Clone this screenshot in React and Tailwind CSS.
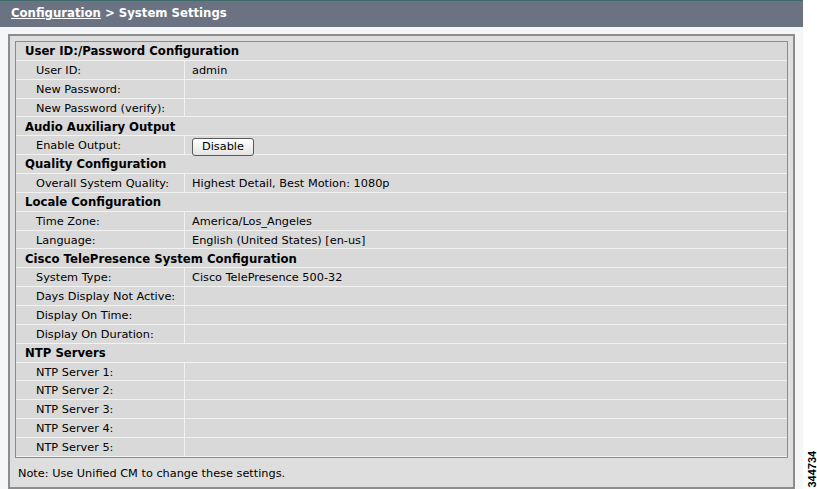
import React from 'react';

const sections = [
  {
    title: 'User ID:/Password Configuration',
    rows: [
      ['User ID:', 'admin'],
      ['New Password:', ''],
      ['New Password (verify):', ''],
    ],
  },
  {
    title: 'Audio Auxiliary Output',
    rows: [['Enable Output:', 'button']],
  },
  {
    title: 'Quality Configuration',
    rows: [['Overall System Quality:', 'Highest Detail, Best Motion: 1080p']],
  },
  {
    title: 'Locale Configuration',
    rows: [
      ['Time Zone:', 'America/Los_Angeles'],
      ['Language:', 'English (United States) [en-us]'],
    ],
  },
  {
    title: 'Cisco TelePresence System Configuration',
    rows: [
      ['System Type:', 'Cisco TelePresence 500-32'],
      ['Days Display Not Active:', ''],
      ['Display On Time:', ''],
      ['Display On Duration:', ''],
    ],
  },
  {
    title: 'NTP Servers',
    rows: [
      ['NTP Server 1:', ''],
      ['NTP Server 2:', ''],
      ['NTP Server 3:', ''],
      ['NTP Server 4:', ''],
      ['NTP Server 5:', ''],
    ],
  },
];

const Row = ({ label, value }) => (
  <div className="flex h-[18.86px] border-b border-[#f2f2f2] items-center">
    <div className="w-[169px] h-full flex items-center pl-[20px] pt-[3px] border-r border-[#f2f2f2] shrink-0">
      {label}
    </div>
    <div className="flex-1 h-full flex items-center pl-[7px] pt-[3px]">
      {value === 'button' ? (
        <button className="h-[18px] px-[9px] border border-[#5a5a5a] rounded-[3px] bg-gradient-to-b from-white to-[#e4e4e4] text-[11.3px] leading-none text-black">
          Disable
        </button>
      ) : (
        value
      )}
    </div>
  </div>
);

export default function App() {
  return (
    <div
      className="w-[817px] h-[489px] flex bg-white text-[11.3px] text-black overflow-hidden"
      style={{ fontFamily: '"DejaVu Sans", Verdana, sans-serif' }}
    >
      <div className="w-[803px] flex flex-col shrink-0">
        <div className="h-[27px] bg-[#6b7383] border-t border-[#3f6b6b] flex items-center pl-[11px] text-[11.7px] font-bold text-white">
          <span className="underline">Configuration</span>
          <span>&nbsp;&gt; System Settings</span>
        </div>
        <div className="flex-1 bg-[#f4f6f8] pt-[7px] pl-[8px] pr-[8px]">
          <div className="w-[787px] h-[455px] border-2 border-[#8c8c8c] bg-[#dedede] px-[5px] pt-[5px] flex flex-col">
            <div className="border border-[#8c8c8c] bg-[#d9d9d9]">
              {sections.map((s) => (
                <div key={s.title}>
                  <div className="h-[18.86px] border-b border-[#f2f2f2] flex items-center pl-[9px] pt-[2px] font-bold text-[11.7px]">
                    {s.title}
                  </div>
                  {s.rows.map(([l, v]) => (
                    <Row key={l} label={l} value={v} />
                  ))}
                </div>
              ))}
            </div>
            <div className="pl-[3px] pt-[8px]">Note: Use Unified CM to change these settings.</div>
          </div>
        </div>
      </div>
      <div className="flex-1 relative">
        <div
          className="absolute left-[1px] bottom-[2px] origin-top-left -rotate-90 translate-y-full text-[11px] text-black font-bold whitespace-nowrap"
          style={{ fontFamily: '"Liberation Sans", Arial, sans-serif' }}
        >
          344734
        </div>
      </div>
    </div>
  );
}
